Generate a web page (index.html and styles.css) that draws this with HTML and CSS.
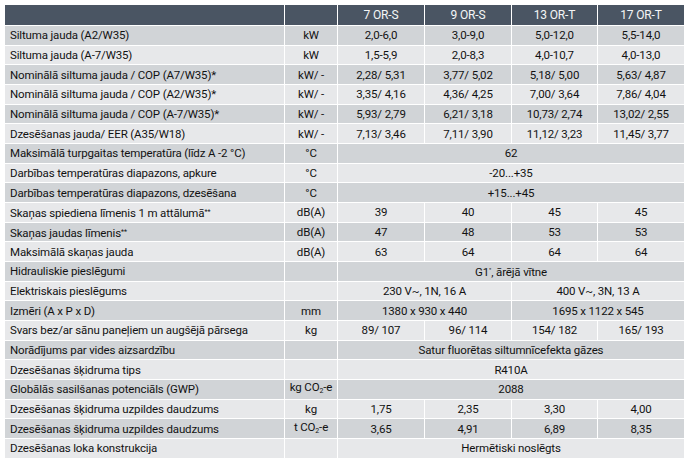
FILE: index.html
```html
<!DOCTYPE html>
<html lang="lv">
<head>
<meta charset="utf-8">
<title>Tehniskie dati</title>
<link rel="stylesheet" href="styles.css">
</head>
<body>
<table class="spec">
  <colgroup>
    <col class="c-label">
    <col class="c-unit">
    <col class="c-d1">
    <col class="c-d2">
    <col class="c-d3">
    <col class="c-d4">
  </colgroup>
  <thead>
    <tr class="head">
      <th></th>
      <th></th>
      <th>7 OR-S</th>
      <th>9 OR-S</th>
      <th>13 OR-T</th>
      <th>17 OR-T</th>
    </tr>
  </thead>
  <tbody>
    <tr class="dark"><td class="label">Siltuma jauda (A2/W35)</td><td>kW</td><td>2,0-6,0</td><td>3,0-9,0</td><td>5,0-12,0</td><td>5,5-14,0</td></tr>
    <tr class="light"><td class="label">Siltuma jauda (A-7/W35)</td><td>kW</td><td>1,5-5,9</td><td>2,0-8,3</td><td>4,0-10,7</td><td>4,0-13,0</td></tr>
    <tr class="dark"><td class="label">Nominālā siltuma jauda / COP (A7/W35)*</td><td>kW/ -</td><td>2,28/ 5,31</td><td>3,77/ 5,02</td><td>5,18/ 5,00</td><td>5,63/ 4,87</td></tr>
    <tr class="light"><td class="label">Nominālā siltuma jauda / COP (A2/W35)*</td><td>kW/ -</td><td>3,35/ 4,16</td><td>4,36/ 4,25</td><td>7,00/ 3,64</td><td>7,86/ 4,04</td></tr>
    <tr class="dark"><td class="label">Nominālā siltuma jauda / COP (A-7/W35)*</td><td>kW/ -</td><td>5,93/ 2,79</td><td>6,21/ 3,18</td><td>10,73/ 2,74</td><td>13,02/ 2,55</td></tr>
    <tr class="light"><td class="label">Dzesēšanas jauda/ EER (A35/W18)</td><td>kW/ -</td><td>7,13/ 3,46</td><td>7,11/ 3,90</td><td>11,12/ 3,23</td><td>11,45/ 3,77</td></tr>
    <tr class="dark"><td class="label">Maksimālā turpgaitas temperatūra (līdz A -2 °C)</td><td>°C</td><td colspan="4">62</td></tr>
    <tr class="light"><td class="label">Darbības temperatūras diapazons, apkure</td><td>°C</td><td colspan="4">-20...+35</td></tr>
    <tr class="dark"><td class="label">Darbības temperatūras diapazons, dzesēšana</td><td>°C</td><td colspan="4">+15...+45</td></tr>
    <tr class="light"><td class="label">Skaņas spiediena līmenis 1 m attālumā<span class="sup">**</span></td><td>dB(A)</td><td>39</td><td>40</td><td>45</td><td>45</td></tr>
    <tr class="dark"><td class="label">Skaņas jaudas līmenis<span class="sup">**</span></td><td>dB(A)</td><td>47</td><td>48</td><td>53</td><td>53</td></tr>
    <tr class="light"><td class="label">Maksimālā skaņas jauda</td><td>dB(A)</td><td>63</td><td>64</td><td>64</td><td>64</td></tr>
    <tr class="dark"><td class="label">Hidrauliskie pieslēgumi</td><td></td><td colspan="4">G1<span class="sup">″</span>, ārējā vītne</td></tr>
    <tr class="light"><td class="label">Elektriskais pieslēgums</td><td></td><td colspan="2">230 V~, 1N, 16 A</td><td colspan="2">400 V~, 3N, 13 A</td></tr>
    <tr class="dark"><td class="label">Izmēri (A x P x D)</td><td>mm</td><td colspan="2">1380 x 930 x 440</td><td colspan="2">1695 x 1122 x 545</td></tr>
    <tr class="light"><td class="label">Svars bez/ar sānu paneļiem un augšējā pārsega</td><td>kg</td><td>89/ 107</td><td>96/ 114</td><td>154/ 182</td><td>165/ 193</td></tr>
    <tr class="dark"><td class="label">Norādījums par vides aizsardzību</td><td></td><td colspan="4">Satur fluorētas siltumnīcefekta gāzes</td></tr>
    <tr class="light"><td class="label">Dzesēšanas šķidruma tips</td><td></td><td colspan="4">R410A</td></tr>
    <tr class="dark"><td class="label">Globālās sasilšanas potenciāls (GWP)</td><td>kg CO<span class="sub">2</span>-e</td><td colspan="4">2088</td></tr>
    <tr class="light"><td class="label">Dzesēšanas šķidruma uzpildes daudzums</td><td>kg</td><td>1,75</td><td>2,35</td><td>3,30</td><td>4,00</td></tr>
    <tr class="dark"><td class="label">Dzesēšanas šķidruma uzpildes daudzums</td><td>t CO<span class="sub">2</span>-e</td><td>3,65</td><td>4,91</td><td>6,89</td><td>8,35</td></tr>
    <tr class="light"><td class="label">Dzesēšanas loka konstrukcija</td><td></td><td colspan="4">Hermētiski noslēgts</td></tr>
  </tbody>
</table>
</body>
</html>
```
FILE: styles.css
```css
html, body {
  margin: 0;
  padding: 0;
  background: #ffffff;
}

body {
  padding: 4px 0 0 4px;
  font-family: Roboto, "Liberation Sans", sans-serif;
  font-size: 11.5px;
  color: #121212;
}

.spec {
  table-layout: fixed;
  border-collapse: separate;
  border-spacing: 1px;
  width: 681px;
}

.c-label { width: 279px; }
.c-unit { width: 52px; }
.c-d1 { width: 86px; }
.c-d2 { width: 86px; }
.c-d3 { width: 85px; }
.c-d4 { width: 86px; }

.spec th,
.spec td {
  padding: 0;
  text-align: center;
  white-space: nowrap;
  vertical-align: middle;
  letter-spacing: -0.15px;
}

.head th {
  height: 20px;
  background: #4a5563;
  color: #f4f5f6;
  font-weight: 400;
  font-size: 12px;
}

.spec tbody td {
  height: 18.68px;
  line-height: 12px;
}

.dark td { background: #d1d4d7; }
.light td { background: #e7e8ea; }

.spec td.label {
  text-align: left;
  text-indent: 5px;
}

.sup {
  font-size: 7px;
  vertical-align: 3px;
  letter-spacing: 0;
}

.sub {
  font-size: 7px;
  vertical-align: -2px;
}
```
